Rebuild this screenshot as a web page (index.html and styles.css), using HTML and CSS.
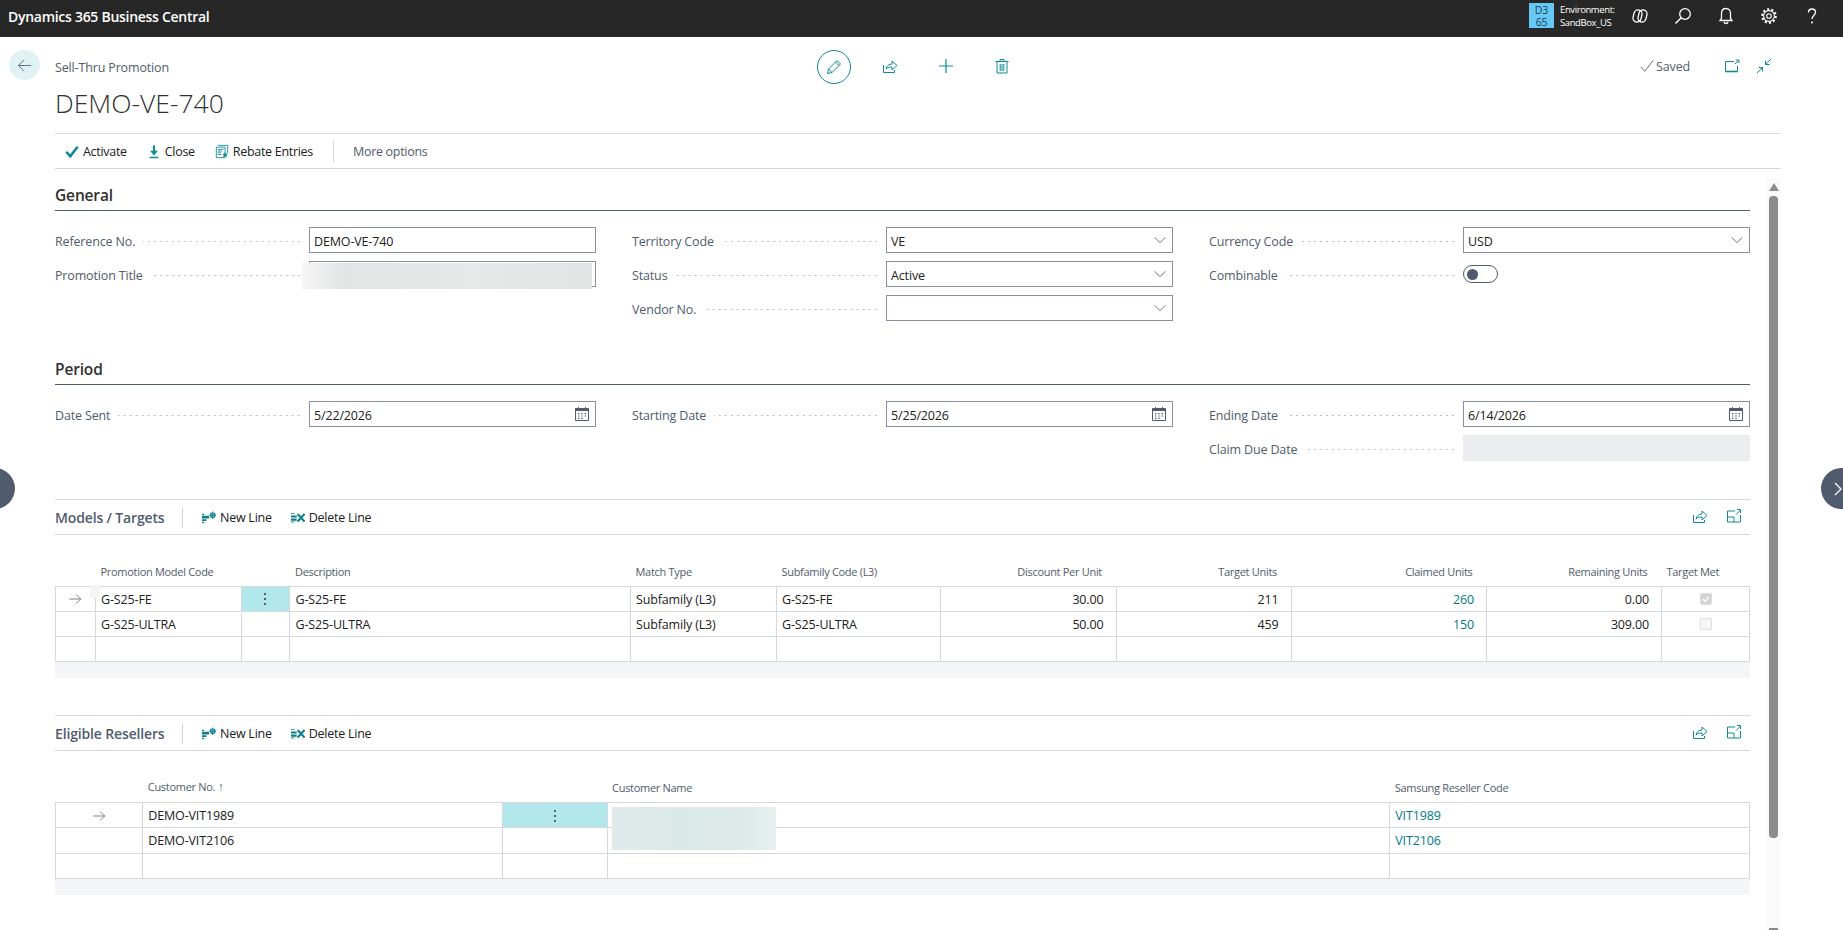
FILE: index.html
```html
<!DOCTYPE html>
<html lang="en">

<head>
    <meta charset="UTF-8">
    <title>Sell-Thru Promotion - Dynamics 365 Business Central</title>
    <link rel="stylesheet" href="styles.css">
</head>

<body>
    <!-- shared icons -->
    <svg class="sprite" xmlns="http://www.w3.org/2000/svg">
        <symbol id="i-chevron" viewBox="0 0 16 16"><path d="M2 5l6 6 6-6" fill="none" stroke="currentColor" stroke-width="1"/></symbol>
        <symbol id="i-calendar" viewBox="0 0 16 16"><path d="M1.500 2.500h13v12h-13z" fill="none" stroke="currentColor"/><path d="M1.500 2.500h13v2.500h-13z" fill="currentColor"/><path d="M4.500 1v2M11.500 1v2" stroke="currentColor"/><path d="M4 7h1.400v1.200H4zM7.300 7h1.400v1.200H7.300zM10.600 7H12v1.200h-1.400zM4 9.400h1.400v1.200H4zM7.300 9.400h1.400v1.200H7.300zM10.600 9.400H12v1.200h-1.400zM4 11.800h1.400V13H4zM7.300 11.800h1.400V13H7.300z" fill="currentColor"/></symbol>
        <symbol id="i-share" viewBox="0 0 16 16"><path d="M1.500 7v7.500h11V12" fill="none" stroke="currentColor"/><path d="M4 11c.6-3.300 3-5 6-5V3l5 4.500L10 12V9C7.500 9 5.500 9.500 4 11z" fill="none" stroke="currentColor"/></symbol>
        <symbol id="i-expand" viewBox="0 0 16 16"><path d="M9 3H1.500v11h13V7" fill="none" stroke="currentColor"/><path d="M1.500 9h6.500v5" fill="none" stroke="currentColor"/><path d="M10 6.500L14.500 2M11 1.500h3.500V5" fill="none" stroke="currentColor"/></symbol>
        <symbol id="i-newline" viewBox="0 0 18 16"><path d="M1 5.500h8v3H1zM1 9.500h5v2H1zM1 12.500h2.500v1.500H1zM1 3h2.500v1.500H1z" fill="currentColor"/><path d="M11 2.500h4.500v4.500H11zM13.200 .5v8.500M9.200 4.700h8" fill="none" stroke="currentColor" stroke-width="1.200"/></symbol>
        <symbol id="i-delline" viewBox="0 0 18 16"><path d="M1 5h6.500v2.500H1zM1 8.500h6.500V11H1z" fill="currentColor"/><path d="M1 3h4M1 12.500h4" stroke="currentColor"/><path d="M8.500 3.500l8 8.500M16.500 3.500L8.500 12" fill="none" stroke="currentColor" stroke-width="2.300"/></symbol>
        <symbol id="i-arrow" viewBox="0 0 16 16"><path d="M1.500 8h13M9.500 3l5 5-5 5" fill="none" stroke="currentColor"/></symbol>
        <symbol id="i-dots" viewBox="0 0 4 16"><circle cx="2" cy="3" r="1"/><circle cx="2" cy="8" r="1"/><circle cx="2" cy="13" r="1"/></symbol>
    </svg>

    <!-- top bar -->
    <header class="topbar">
        <div class="brand">Dynamics 365 Business Central</div>
        <div class="env-tile">D3<br>65</div>
        <div class="env-text">
            <div>Environment:</div>
            <div>SandBox_US</div>
        </div>
        <div class="top-icons">
            <svg class="top-icon" viewBox="0 0 18 18"><rect x="2.500" y="3" width="8" height="12" rx="3.800" transform="rotate(14 6.500 9)" fill="none" stroke="currentColor" stroke-width="1.300"/><rect x="7.500" y="3" width="8" height="12" rx="3.800" transform="rotate(14 11.500 9)" fill="none" stroke="currentColor" stroke-width="1.300"/></svg>
            <svg class="top-icon" viewBox="0 0 18 18"><circle cx="11" cy="7" r="5.300" fill="none" stroke="currentColor" stroke-width="1.300"/><path d="M7.200 10.800L1.500 16.500" stroke="currentColor" stroke-width="1.500"/></svg>
            <svg class="top-icon" viewBox="0 0 18 18"><path d="M9 1.500c-3 0-4.500 2.200-4.500 5v5L3 13.500h12l-1.500-2v-5c0-2.800-1.500-5-4.500-5zM7 15c.3 1 1 1.500 2 1.500s1.700-.5 2-1.500" fill="none" stroke="currentColor" stroke-width="1.300"/></svg>
            <svg class="top-icon" viewBox="0 0 18 18"><circle cx="9" cy="9" r="6.800" fill="none" stroke="currentColor" stroke-width="2" stroke-dasharray="2.200 2.072"/><circle cx="9" cy="9" r="5.400" fill="none" stroke="currentColor" stroke-width="1.100"/><circle cx="9" cy="9" r="2.300" fill="none" stroke="currentColor" stroke-width="1.100"/></svg>
            <svg class="top-icon" viewBox="0 0 18 18"><path d="M5.500 5.500C5.500 3.300 7 2 9 2s3.500 1.300 3.500 3.300c0 3-3.500 3.300-3.500 6.700" fill="none" stroke="currentColor" stroke-width="1.300"/><circle cx="9" cy="15.500" r="1" fill="currentColor"/></svg>
        </div>
    </header>

    <div class="page">
        <button class="back">
            <svg class="back-icon" viewBox="0 0 16 16"><path d="M15 8H1.500M7.500 2l-6 6 6 6" fill="none" stroke="currentColor"/></svg>
        </button>

        <main class="main">
            <!-- page head -->
            <div class="head-row">
                <div class="crumb">Sell-Thru Promotion</div>
                <div class="head-tools">
                    <span class="tool tool-edit">
                        <svg class="icon" viewBox="0 0 16 16"><path d="M1.500 14.500l1-4.500 8.500-8.500 3.500 3.500L6 13.500zM2.500 10L6 13.500M9.500 3l3.500 3.500" fill="none" stroke="currentColor"/></svg>
                    </span>
                    <span class="tool tool-lift"><svg class="icon"><use href="#i-share"/></svg></span>
                    <span class="tool tool-lift">
                        <svg class="icon" viewBox="0 0 16 16"><path d="M8 1v14M1 8h14" stroke="currentColor" stroke-width="1.200"/></svg>
                    </span>
                    <span class="tool tool-lift">
                        <svg class="icon" viewBox="0 0 16 16"><path d="M3 4v11h10V4M1.500 3.500h13M6 3.500V1.500h4v2M6.200 6v7M8 6v7M9.800 6v7" fill="none" stroke="currentColor"/></svg>
                    </span>
                </div>
                <div class="head-status">
                    <svg class="saved-check" viewBox="0 0 16 16"><path d="M1 9l4.500 5L15 1.500" fill="none" stroke="currentColor"/></svg>
                    <span class="saved">Saved</span>
                    <span class="status-tool">
                        <svg class="icon" viewBox="0 0 16 16"><path d="M10 3.500H1.500v10h12V8" fill="none" stroke="currentColor"/><path d="M1.500 13.500h12" stroke="currentColor" stroke-width="2" opacity=".6"/><path d="M11 6l3.500-3.500M12 2h3v3" fill="none" stroke="currentColor"/></svg>
                    </span>
                    <span class="status-tool">
                        <svg class="icon" viewBox="0 0 16 16"><path d="M15 1L9.500 6.500M9.500 2.500v4h4M1 15l5.500-5.500M2.500 9.500h4v4" fill="none" stroke="currentColor"/></svg>
                    </span>
                </div>
            </div>
            <h1 class="title">DEMO-VE-740</h1>

            <!-- actions -->
            <nav class="action-bar">
                <a class="action action-first">
                    <svg class="action-icon" viewBox="0 0 16 16"><path d="M1.500 8.500l4.500 5 8.500-11" fill="none" stroke="currentColor" stroke-width="3"/></svg>
                    Activate
                </a>
                <a class="action">
                    <svg class="action-icon" viewBox="0 0 16 16"><path d="M8 1v9" stroke="currentColor" stroke-width="2.400"/><path d="M3.500 7h9L8 12.500zM3 14h10v1.700H3z" fill="currentColor"/></svg>
                    Close
                </a>
                <a class="action">
                    <svg class="action-icon" viewBox="0 0 16 16"><path d="M3.500 1h11v9M1.500 3h10v12h-10z" fill="none" stroke="currentColor"/><path d="M3 5.500h7M3 7.500h5M3 9.500h4M3 11.500h4" stroke="currentColor"/><path d="M11.500 8.500l1 2 2.300.2-1.700 1.500.6 2.300-2.200-1.200-2.200 1.200.6-2.300-1.700-1.500 2.300-.2z" fill="currentColor"/></svg>
                    Rebate Entries
                </a>
                <span class="bar-sep"></span>
                <a class="action action-more">More options</a>
            </nav>

            <div class="sections">
                <!-- General -->
                <h2 class="group-title">General</h2>
                <div class="form-grid">
                    <div class="col">
                        <div class="field"><label>Reference No.<i></i></label><div class="input">DEMO-VE-740</div></div>
                        <div class="field">
                            <label>Promotion Title<i></i></label>
                            <div class="input"></div>
                            <div class="blur blur-title"></div>
                        </div>
                    </div>
                    <div class="col">
                        <div class="field"><label>Territory Code<i></i></label><div class="input">VE<svg class="chev"><use href="#i-chevron"/></svg></div></div>
                        <div class="field"><label>Status<i></i></label><div class="input">Active<svg class="chev"><use href="#i-chevron"/></svg></div></div>
                        <div class="field"><label>Vendor No.<i></i></label><div class="input"><svg class="chev"><use href="#i-chevron"/></svg></div></div>
                    </div>
                    <div class="col">
                        <div class="field"><label>Currency Code<i></i></label><div class="input">USD<svg class="chev"><use href="#i-chevron"/></svg></div></div>
                        <div class="field"><label>Combinable<i></i></label><div class="toggle-cell"><span class="toggle"><b></b></span></div></div>
                    </div>
                </div>

                <!-- Period -->
                <h2 class="group-title group-period">Period</h2>
                <div class="form-grid">
                    <div class="col">
                        <div class="field"><label>Date Sent<i></i></label><div class="input">5/22/2026<svg class="cal"><use href="#i-calendar"/></svg></div></div>
                    </div>
                    <div class="col">
                        <div class="field"><label>Starting Date<i></i></label><div class="input">5/25/2026<svg class="cal"><use href="#i-calendar"/></svg></div></div>
                    </div>
                    <div class="col">
                        <div class="field"><label>Ending Date<i></i></label><div class="input">6/14/2026<svg class="cal"><use href="#i-calendar"/></svg></div></div>
                        <div class="field"><label>Claim Due Date<i></i></label><div class="input input-off"></div></div>
                    </div>
                </div>

                <!-- Models / Targets -->
                <section class="part part-models">
                    <div class="part-bar">
                        <span class="part-title">Models / Targets</span>
                        <span class="bar-sep"></span>
                        <a class="part-action"><svg class="line-icon"><use href="#i-newline"/></svg>New Line</a>
                        <a class="part-action"><svg class="line-icon"><use href="#i-delline"/></svg>Delete Line</a>
                        <span class="part-tools">
                            <svg class="icon"><use href="#i-share"/></svg>
                            <svg class="icon"><use href="#i-expand"/></svg>
                        </span>
                    </div>
                    <table class="lines lines-models">
                        <colgroup>
                            <col class="c-arrow"><col class="c-code"><col class="c-menu"><col class="c-desc"><col class="c-match">
                            <col class="c-sub"><col class="c-disc"><col class="c-target"><col class="c-claimed"><col class="c-remain"><col>
                        </colgroup>
                        <thead>
                            <tr>
                                <th></th><th>Promotion Model Code</th><th></th><th class="pad-desc">Description</th><th>Match Type</th><th>Subfamily Code (L3)</th>
                                <th class="num">Discount Per Unit</th><th class="num">Target Units</th><th class="num">Claimed Units</th><th class="num">Remaining Units</th><th>Target Met</th>
                            </tr>
                        </thead>
                        <tbody>
                            <tr>
                                <td class="arrow-cell"><span class="patch"></span><svg class="row-arrow"><use href="#i-arrow"/></svg></td>
                                <td>G-S25-FE</td>
                                <td class="menu-cell"><svg class="row-dots"><use href="#i-dots"/></svg></td>
                                <td class="pad-desc">G-S25-FE</td><td>Subfamily (L3)</td><td>G-S25-FE</td>
                                <td class="num">30.00</td><td class="num">211</td><td class="num link">260</td><td class="num">0.00</td>
                                <td class="check-cell"><span class="check check-on"><svg viewBox="0 0 12 12"><path d="M2.500 6l2.500 3 4.500-6" fill="none" stroke="#fff" stroke-width="1.500"/></svg></span></td>
                            </tr>
                            <tr>
                                <td></td><td>G-S25-ULTRA</td><td></td><td class="pad-desc">G-S25-ULTRA</td><td>Subfamily (L3)</td><td>G-S25-ULTRA</td>
                                <td class="num">50.00</td><td class="num">459</td><td class="num link">150</td><td class="num">309.00</td>
                                <td class="check-cell"><span class="check"></span></td>
                            </tr>
                            <tr>
                                <td></td><td></td><td></td><td></td><td></td><td></td><td></td><td></td><td></td><td></td><td></td>
                            </tr>
                        </tbody>
                    </table>
                    <div class="strip"></div>
                </section>

                <!-- Eligible Resellers -->
                <section class="part part-resellers">
                    <div class="part-bar">
                        <span class="part-title">Eligible Resellers</span>
                        <span class="bar-sep"></span>
                        <a class="part-action"><svg class="line-icon"><use href="#i-newline"/></svg>New Line</a>
                        <a class="part-action"><svg class="line-icon"><use href="#i-delline"/></svg>Delete Line</a>
                        <span class="part-tools">
                            <svg class="icon"><use href="#i-share"/></svg>
                            <svg class="icon"><use href="#i-expand"/></svg>
                        </span>
                    </div>
                    <table class="lines lines-resellers">
                        <colgroup>
                            <col class="c-arrow2"><col class="c-cust"><col class="c-menu2"><col class="c-name"><col>
                        </colgroup>
                        <thead>
                            <tr><th></th><th>Customer No. <span class="sort">&#8593;</span></th><th></th><th>Customer Name</th><th>Samsung Reseller Code</th></tr>
                        </thead>
                        <tbody>
                            <tr>
                                <td class="arrow-cell"><svg class="row-arrow"><use href="#i-arrow"/></svg></td>
                                <td>DEMO-VIT1989</td>
                                <td class="menu-cell"><svg class="row-dots"><use href="#i-dots"/></svg></td>
                                <td class="name-cell"><div class="blur blur-name"></div></td>
                                <td class="link">VIT1989</td>
                            </tr>
                            <tr><td></td><td>DEMO-VIT2106</td><td></td><td></td><td class="link">VIT2106</td></tr>
                            <tr><td></td><td></td><td></td><td></td><td></td></tr>
                        </tbody>
                    </table>
                    <div class="strip"></div>
                </section>
            </div>
        </main>
    </div>

    <!-- things lying over the page -->
    <div class="scrollbar">
        <span class="scroll-up"></span>
        <span class="scroll-thumb"></span>
        <span class="scroll-down"></span>
    </div>
    <div class="side-btn side-left"></div>
    <div class="side-btn side-right">
        <svg viewBox="0 0 16 16"><path d="M4 2l6 6-6 6" fill="none" stroke="#fff" stroke-width="1.300"/></svg>
    </div>
</body>

</html>
```

FILE: styles.css
```css
/* Reset */
* {
    margin: 0;
    padding: 0;
    box-sizing: border-box;
}

:root {
    --teal: #0f8a96;
    --link: #00798a;
    --slate: #505c6d;
    --line: #d5d8dc;
    --text: #212121;
}

html,
body {
    height: 930px;
    overflow: hidden;
}

body {
    position: relative;
    background: #fff;
    color: var(--text);
    font-family: "Open Sans", "Noto Sans", sans-serif;
    font-size: 12.500px;
    letter-spacing: -0.15px;
}

.sprite {
    display: none;
}

.icon {
    width: 16px;
    height: 16px;
    color: var(--teal);
}

/* Top bar */
.topbar {
    display: flex;
    align-items: center;
    height: 37px;
    background: #272727;
    color: #fff;
    padding-left: 8px;
}

.brand {
    font-size: 14px;
    font-weight: 600;
    letter-spacing: -0.28px;
    margin-right: auto;
    padding-bottom: 4px;
}

.env-tile {
    width: 25px;
    height: 25px;
    background: #66c9f5;
    color: #1c3a4a;
    font-size: 10.500px;
    line-height: 12px;
    text-align: center;
    padding-top: 1px;
    margin: 0 6px 6px 0;
}

.env-text {
    width: 60px;
    font-size: 9.500px;
    line-height: 13.500px;
    letter-spacing: -0.4px;
    padding-bottom: 5px;
}

.top-icons {
    display: flex;
    gap: 25px;
    width: 223px;
    padding: 0 0 5px 11px;
}

.top-icon {
    width: 18px;
    height: 18px;
    flex: none;
}

/* Page */
.page {
    display: flex;
    align-items: flex-start;
    padding: 13px 62px 0 9px;
}

.back {
    width: 31px;
    height: 30px;
    flex: none;
    border: none;
    border-radius: 50%;
    background: #dff3f5;
    color: #5b6b7b;
    margin-right: 15px;
    display: flex;
    align-items: center;
    justify-content: center;
}

.back-icon {
    width: 15px;
    height: 15px;
}

.main {
    flex: 1;
    min-width: 0;
}

.head-row {
    display: flex;
    align-items: center;
    height: 34px;
}

.crumb {
    width: 762px;
    color: var(--slate);
}

.head-tools {
    display: flex;
    align-items: center;
    gap: 22px;
}

.tool {
    width: 34px;
    height: 34px;
    display: flex;
    align-items: center;
    justify-content: center;
}

.tool-lift {
    padding-bottom: 2px;
}

.tool-edit {
    border: 1.500px solid var(--teal);
    border-radius: 50%;
}

.head-status {
    display: flex;
    align-items: center;
    margin-left: auto;
    padding: 0 5px 2px 0;
}

.saved-check {
    width: 14px;
    height: 14px;
    color: #505c6d;
    margin-right: 2px;
}

.saved {
    color: var(--slate);
    margin-right: 22px;
}

.status-tool {
    width: 24px;
    display: flex;
    justify-content: center;
    margin-left: 8px;
}

.title {
    font-size: 26.500px;
    font-weight: 300;
    line-height: 38px;
    color: #323130;
    padding-bottom: 11px;
    letter-spacing: 0;
}

/* Action bar */
.action-bar {
    display: flex;
    align-items: center;
    height: 36px;
    border-top: 1px solid var(--line);
    border-bottom: 1px solid var(--line);
}

.action {
    display: flex;
    align-items: center;
    gap: 4px;
    margin-right: 20px;
    letter-spacing: -0.3px;
}

.action-first {
    margin-left: 10px;
}

.action-icon {
    width: 14px;
    height: 15px;
    color: var(--teal);
}

.bar-sep {
    width: 1px;
    height: 21px;
    background: var(--line);
}

.action-more {
    color: var(--slate);
    margin-left: 19px;
}

/* Form groups */
.sections {
    width: 1695px;
}

.group-title {
    font-size: 15.500px;
    font-weight: 600;
    line-height: 22px;
    color: #323130;
    padding: 15px 0 4px;
    border-bottom: 1px solid var(--slate);
}

.group-period {
    margin-top: 22px;
}

.form-grid {
    display: grid;
    grid-template-columns: repeat(3, 541px);
    column-gap: 36px;
    margin-top: 16px;
}

.col {
    display: flex;
    flex-direction: column;
    gap: 8px;
}

.field {
    position: relative;
    display: grid;
    grid-template-columns: 1fr 287px;
    height: 26px;
}

.field label {
    display: flex;
    align-items: center;
    color: var(--slate);
    padding-top: 2px;
}

.field label i {
    flex: 1;
    height: 3px;
    margin: 0 7px 0 8px;
    background-image: radial-gradient(circle, #b9bec6 0.7px, transparent 1px);
    background-size: 6px 3px;
    background-position: right center;
}

.input {
    display: flex;
    align-items: center;
    justify-content: space-between;
    border: 1px solid #8a90a0;
    padding: 2px 4px 0;
}

.input-off {
    background: #ecedef;
    border-color: #ecedef;
}

.chev {
    width: 14px;
    height: 14px;
    color: #505c6d;
    margin: -2px 1px 0 auto;
}

.cal {
    width: 16px;
    height: 16px;
    color: #505c6d;
    margin: -2px 1px 0 auto;
}

.toggle-cell {
    display: flex;
    align-items: flex-start;
    padding-top: 4px;
}

.toggle {
    display: flex;
    align-items: center;
    width: 35px;
    height: 18px;
    border: 1px solid var(--slate);
    border-radius: 9px;
    padding-left: 3px;
}

.toggle b {
    width: 11px;
    height: 11px;
    border-radius: 50%;
    background: var(--slate);
}

.blur {
    position: absolute;
}

.blur-title {
    left: 247px;
    top: 2px;
    width: 290px;
    height: 26px;
    background: linear-gradient(90deg, #f6f6f6, #e3e4e4 14%, #e7e8e8 60%, #e2e3e3);
}

/* Parts */
.part-models {
    margin-top: 38px;
}

.part-resellers {
    margin-top: 37px;
}

.part-bar {
    display: flex;
    align-items: center;
    height: 36px;
    padding-top: 1px;
    border-top: 1px solid var(--line);
    border-bottom: 1px solid var(--line);
}

.part-title {
    width: 127px;
    font-size: 14px;
    font-weight: 600;
    color: var(--slate);
}

.part-action {
    display: flex;
    align-items: center;
    gap: 3px;
    margin-left: 18px;
    letter-spacing: -0.25px;
}

.line-icon {
    width: 16px;
    height: 14px;
    color: #0d7f8a;
}

.part-tools {
    display: flex;
    gap: 18px;
    margin-left: auto;
    padding: 0 8px 3px 0;
}

/* Line tables */
.lines {
    width: 100%;
    table-layout: fixed;
    border-collapse: collapse;
}

.lines th {
    height: 51px;
    padding: 0 6px 7px 5px;
    vertical-align: bottom;
    text-align: left;
    font-size: 11px;
    font-weight: 400;
    letter-spacing: -0.3px;
    color: var(--slate);
    white-space: nowrap;
}

.lines td {
    height: 25.330px;
    padding: 1px 6px 0 5px;
    border: 1px solid var(--line);
    white-space: nowrap;
}

.lines .num {
    text-align: right;
    padding-right: 12px;
}

.lines th.num {
    padding-right: 14px;
}

.lines .pad-desc {
    padding-left: 6px;
}

.lines .link {
    color: var(--link);
}

.c-arrow { width: 40px; }
.c-code { width: 146px; }
.c-menu { width: 47.500px; }
.c-desc { width: 341.500px; }
.c-match { width: 146px; }
.c-sub { width: 164px; }
.c-disc { width: 175.500px; }
.c-target { width: 175px; }
.c-claimed { width: 195.500px; }
.c-remain { width: 175px; }

.c-arrow2 { width: 87.300px; }
.c-cust { width: 360.200px; }
.c-menu2 { width: 104.100px; }
.c-name { width: 782.700px; }

.arrow-cell {
    position: relative;
    text-align: center;
    line-height: 0;
}

.row-arrow {
    width: 14px;
    height: 14px;
    color: #6e6e6e;
}

.patch {
    position: absolute;
    left: 34px;
    top: -2px;
    width: 10px;
    height: 13px;
    background: #f5f5f5;
}

.menu-cell {
    background: #b2e7eb;
    text-align: center;
    line-height: 0;
}

.row-dots {
    width: 4px;
    height: 16px;
    fill: #2b3a4a;
}

.check-cell {
    line-height: 0;
    padding-left: 38px !important;
}

.check {
    display: inline-block;
    width: 12px;
    height: 12px;
    border: 1px solid #dcdcdc;
    border-radius: 2px;
    background: #f6f6f6;
}

.check svg {
    display: block;
    width: 10px;
    height: 10px;
}

.check-on {
    background: #d4d4d4;
}

.sort {
    font-size: 12px;
}

.name-cell {
    position: relative;
}

.blur-name {
    left: 4px;
    top: 4px;
    width: 164px;
    height: 43px;
    background: linear-gradient(90deg, #e0eaea, #dbe8e8 40%, #dde9e9 80%, #e9efef);
    z-index: 1;
}

.strip {
    height: 16px;
    background: #f4f5f7;
}

/* Scrollbar over the page */
.scrollbar {
    position: absolute;
    left: 1766px;
    top: 178px;
    bottom: 0;
    width: 15px;
    background: #fafafa;
    display: flex;
    flex-direction: column;
    align-items: center;
}

.scroll-up {
    width: 0;
    height: 0;
    margin-top: 5px;
    border-left: 5px solid transparent;
    border-right: 5px solid transparent;
    border-bottom: 8px solid #8c8c8c;
}

.scroll-thumb {
    width: 9px;
    height: 642px;
    margin-top: 5px;
    background: #8c8c8c;
    border-radius: 4px;
}

.scroll-down {
    width: 9px;
    height: 2px;
    margin-top: auto;
    background: #8c8c8c;
}

/* Round paging buttons cut off by the window */
.side-btn {
    position: absolute;
    top: 468px;
    width: 41px;
    height: 41px;
    border-radius: 50%;
    background: var(--slate);
}

.side-left {
    left: -26px;
}

.side-right {
    left: 1821px;
    display: flex;
    align-items: center;
    padding-left: 10px;
}

.side-right svg {
    width: 16px;
    height: 16px;
    flex: none;
}
```
